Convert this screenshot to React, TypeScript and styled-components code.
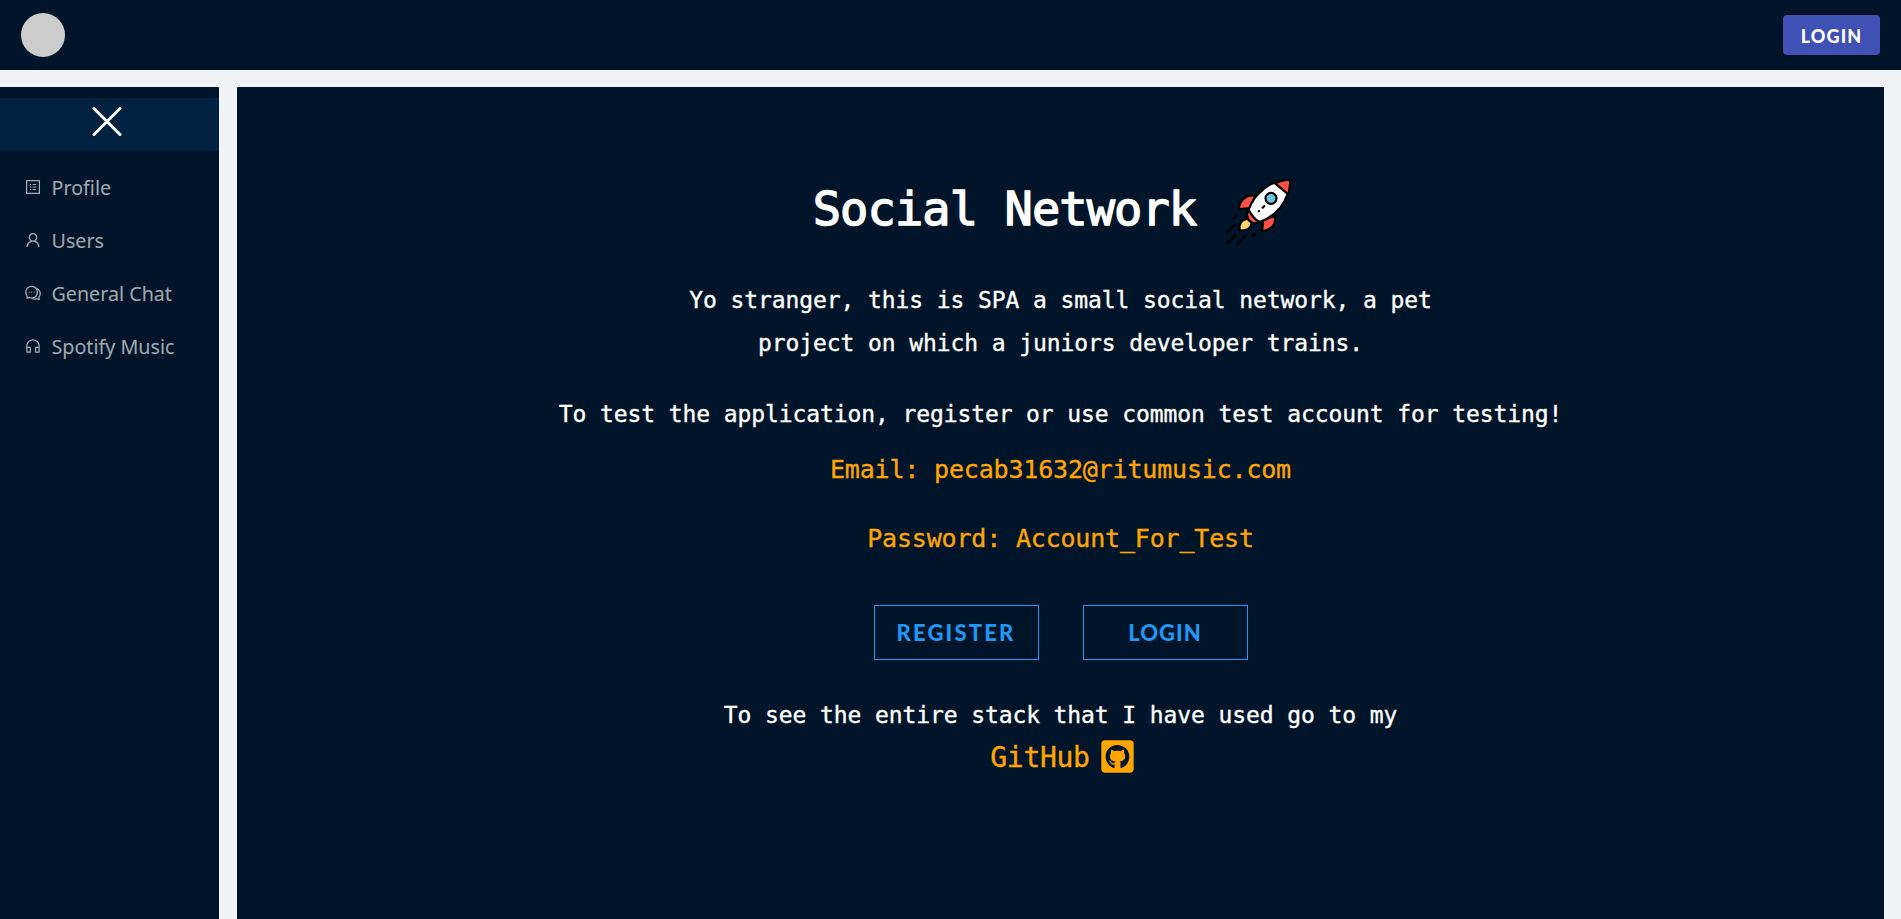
import React from "react";
import styled, { createGlobalStyle } from "styled-components";
import {
  AiOutlineProfile,
  AiOutlineUser,
  AiOutlineComment,
  AiOutlineCustomerService,
} from "react-icons/ai";
import { FaGithubSquare } from "react-icons/fa";

const mono = `"DejaVu Sans Mono", monospace`;

const GlobalStyle = createGlobalStyle`
  * { box-sizing: border-box; }
  body { margin: 0; background: #f0f2f5; font-family: "Noto Sans", sans-serif; }
  h1, p { margin: 0; font-weight: 400; }
  button { padding: 0; cursor: pointer; }
`;

const Page = styled.div`
  height: 919px;
  display: flex;
  flex-direction: column;
  gap: 17px;
  overflow: hidden;
`;

const Header = styled.header`
  height: 70px;
  flex: none;
  display: flex;
  align-items: center;
  justify-content: space-between;
  padding: 0 21px;
  background: #001529;
`;

const Avatar = styled.div`
  width: 44px;
  height: 44px;
  border-radius: 50%;
  background: #ccc;
`;

const HeaderLogin = styled.button`
  width: 97px;
  height: 40px;
  border: 0;
  border-radius: 4px;
  background: #3f51b5;
  color: #fff;
  font: 900 18px/42px Lato, sans-serif;
  letter-spacing: 1.1px;
  box-shadow: 0 3px 1px -2px rgba(0, 0, 0, 0.2), 0 2px 2px rgba(0, 0, 0, 0.14),
    0 1px 5px rgba(0, 0, 0, 0.12);
`;

const Body = styled.div`
  flex: 1;
  display: flex;
  gap: 18px;
  padding-right: 17px;
`;

const Sidebar = styled.aside`
  width: 219px;
  flex: none;
  padding-top: 11px;
  background: #001529;
`;

const Toggle = styled.button`
  display: flex;
  align-items: center;
  justify-content: center;
  width: 100%;
  height: 53px;
  padding: 0 6px 6px 0;
  border: 0;
  background: #002140;
`;

const Menu = styled.nav`
  padding-top: 10px;
`;

const MenuItem = styled.a`
  display: flex;
  align-items: center;
  gap: 10px;
  height: 52.9px;
  padding-left: 23.5px;
  color: rgba(255, 255, 255, 0.65);
  font-size: 19.7px;

  svg {
    width: 18px;
    height: 18px;
  }
`;

const Main = styled.main`
  flex: 1;
  display: flex;
  flex-direction: column;
  align-items: center;
  padding-top: 87px;
  background: #001529;
  color: #fff;
  font-family: ${mono};
`;

const Title = styled.h1`
  display: flex;
  align-items: center;
  gap: 28px;
  height: 76px;
  padding-right: 14px;
  font-size: 47px;
  line-height: 76px;
  letter-spacing: -0.9px;
  -webkit-text-stroke: 1.4px #fff;

  span {
    margin-top: -7px;
  }
`;

const Text = styled.p<{ $top: number }>`
  margin-top: ${(p) => p.$top}px;
  font-size: 23px;
  line-height: 43px;
  letter-spacing: -0.1px;
  text-align: center;
  white-space: pre-line;
  -webkit-text-stroke: 0.35px currentColor;
`;

const Credential = styled(Text)`
  color: orange;
  font-size: 25px;
  letter-spacing: -0.18px;
`;

const Actions = styled.div`
  display: flex;
  gap: 44px;
  margin-top: 45px;
`;

const OutlineButton = styled.button<{ $spacing: number }>`
  width: 165px;
  height: 55px;
  border: 1px solid #2196f3;
  background: transparent;
  color: #2196f3;
  font: 900 22px/54px Lato, sans-serif;
  letter-spacing: ${(p) => p.$spacing}px;
`;

const GithubLink = styled.a`
  display: flex;
  align-items: center;
  gap: 9px;
  height: 40px;
  padding-left: 5px;
  color: orange;
  font-size: 28px;
  letter-spacing: -0.3px;
  -webkit-text-stroke: 0.35px currentColor;

  svg {
    margin-bottom: 2px;
  }
`;

const Rocket = () => (
  <svg width="70" height="70" viewBox="75 51 210 210" aria-hidden="true">
    <g stroke="#000" strokeWidth="6.5" strokeLinejoin="round" strokeLinecap="round">
      <path d="M168 107C140 102 122 122 119 147L154 144Z" fill="#ff5048" />
      <path d="M225 168C236 190 217 210 189 213L193 180Z" fill="#ff5048" />
      <path d="M145 176C124 180 119 196 122 212C140 212 156 207 158 189Z" fill="#ffd66b" />
      <path d="M150 151L181 187L163 190C151 184 143 174 144 160Z" fill="#ff5048" />
      <path d="M274 59C241 61 212 70 193 88C170 106 155 131 149 149C157 166 167 178 182 186C208 178 227 162 244 142C263 120 271 91 274 59Z" fill="#fff" />
      <path d="M274 59C256 59 241 64 228 70L268 103C272 89 273 73 274 59Z" fill="#ff5048" />
      <circle cx="216" cy="115" r="16.5" fill="#6cc5e0" />
      <path d="M191 143L196 138M179 154L180 153M103 176L113 166M81 219L108 194M83 252L110 225M115 252L142 225M160 229L168 221" fill="none" />
    </g>
  </svg>
);

const items = [
  { label: "Profile", Icon: AiOutlineProfile },
  { label: "Users", Icon: AiOutlineUser },
  { label: "General Chat", Icon: AiOutlineComment },
  { label: "Spotify Music", Icon: AiOutlineCustomerService },
];

export default function App() {
  return (
    <Page>
      <GlobalStyle />
      <Header>
        <Avatar />
        <HeaderLogin>LOGIN</HeaderLogin>
      </Header>
      <Body>
        <Sidebar>
          <Toggle aria-label="Close menu">
            <svg width="30" height="30" viewBox="0 0 30 30" stroke="#fff" strokeWidth="3" strokeLinecap="round">
              <path d="M2 1.5L28 27.5M28 1.5L2 27.5" />
            </svg>
          </Toggle>
          <Menu>
            {items.map(({ label, Icon }) => (
              <MenuItem key={label}>
                <Icon />
                {label}
              </MenuItem>
            ))}
          </Menu>
        </Sidebar>
        <Main>
          <Title>
            <span>Social Network</span>
            <Rocket />
          </Title>
          <Text $top={29}>
            {"Yo stranger, this is SPA a small social network, a pet\nproject on which a juniors developer trains."}
          </Text>
          <Text $top={28}>
            To test the application, register or use common test account for testing!
          </Text>
          <Credential $top={12}>Email: pecab31632@ritumusic.com</Credential>
          <Credential $top={26}>Password: Account_For_Test</Credential>
          <Actions>
            <OutlineButton $spacing={2.2}>REGISTER</OutlineButton>
            <OutlineButton $spacing={1}>LOGIN</OutlineButton>
          </Actions>
          <Text $top={34}>To see the entire stack that I have used go to my</Text>
          <GithubLink>
            GitHub
            <FaGithubSquare size={37} />
          </GithubLink>
        </Main>
      </Body>
    </Page>
  );
}
